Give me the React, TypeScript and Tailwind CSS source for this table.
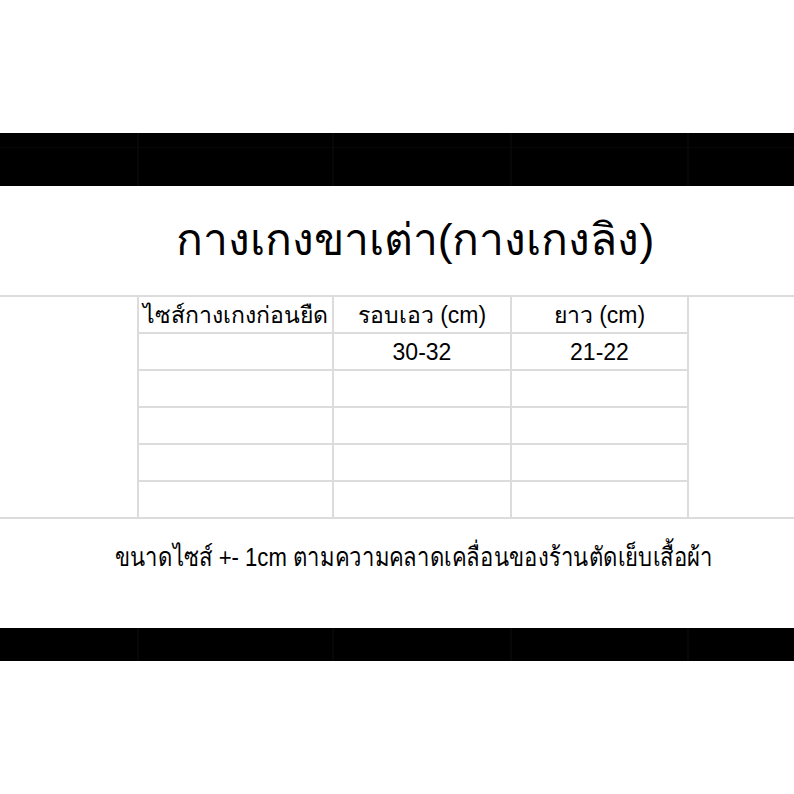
const COLS = "grid-cols-[137px_193px_176px_175px_105px]";

function BlackBar({ height, split }: { height: string; split: boolean }) {
  return (
    <div className={`grid ${COLS} gap-x-[2px] bg-[#070707] ${height}`}>
      {[0, 1, 2, 3, 4].map((i) => (
        <div key={i} className="flex flex-col gap-y-[1px] bg-[#070707]">
          <div className={`bg-black ${split ? "h-[14px]" : "flex-1"}`} />
          {split && <div className="flex-1 bg-black" />}
        </div>
      ))}
    </div>
  );
}

const rows = [
  ["ไซส์กางเกงก่อนยืด", "รอบเอว (cm)", "ยาว (cm)"],
  ["", "30-32", "21-22"],
  ["", "", ""],
  ["", "", ""],
  ["", "", ""],
  ["", "", ""],
];

export default function App() {
  return (
    <div
      className="flex h-[794px] w-[794px] flex-col bg-white text-black"
      style={{ fontFamily: '"Liberation Sans", Arial, sans-serif' }}
    >
      <div className="h-[133px]" />
      <BlackBar height="h-[53px]" split />

      <div className="flex h-[109px] items-center justify-center pl-[36px]">
        <h1 className="text-[44.5px] leading-none">กางเกงขาเต่า(กางเกงลิง)</h1>
      </div>

      <div className={`grid ${COLS} grid-rows-[repeat(6,35px)] gap-[2px] bg-[#dcdcdc] py-[2px]`}>
        <div className="row-span-6 bg-white" />
        {rows.map((r, i) =>
          r.map((cell, j) => (
            <div
              key={`${i}-${j}`}
              className="flex items-center justify-center bg-white pt-[2px] text-[23px] leading-none"
              style={{ gridColumnStart: j + 2, gridRowStart: i + 1 }}
            >
              {cell}
            </div>
          ))
        )}
        <div className="row-span-6 bg-white" style={{ gridColumnStart: 5, gridRowStart: 1 }} />
      </div>

      <div className="flex h-[109px] items-center justify-center pb-[33px] pl-[34px]">
        <p
          className="shrink-0 scale-x-[0.85] whitespace-nowrap text-[26px] leading-none"
          style={{ fontFamily: '"Liberation Sans Narrow", "Liberation Sans", Arial, sans-serif' }}
        >
          ขนาดไซส์ +- 1cm ตามความคลาดเคลื่อนของร้านตัดเย็บเสื้อผ้า
        </p>
      </div>

      <BlackBar height="h-[33px]" split={false} />
    </div>
  );
}
